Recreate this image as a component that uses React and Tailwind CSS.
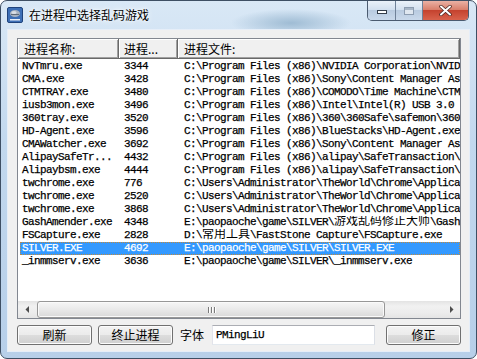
import React from "react";

const mono =
  "font-['Liberation_Mono','Noto_Sans_CJK_SC',monospace] text-[11px] tracking-[-0.6px] [-webkit-text-stroke:0.25px_currentColor]";
const cjk = "font-['Noto_Sans_CJK_SC','Liberation_Sans',sans-serif] text-[12px]";

const rows = [
  ["NvTmru.exe", "3344", "C:\\Program Files (x86)\\NVIDIA Corporation\\NVIDIA Update Core\\NvTmru.exe"],
  ["CMA.exe", "3428", "C:\\Program Files (x86)\\Sony\\Content Manager Assistant\\CMA.exe"],
  ["CTMTRAY.exe", "3480", "C:\\Program Files (x86)\\COMODO\\Time Machine\\CTMTRAY.exe"],
  ["iusb3mon.exe", "3496", "C:\\Program Files (x86)\\Intel\\Intel(R) USB 3.0 eXtensible Host Controller Driver\\iusb3mon.exe"],
  ["360tray.exe", "3520", "C:\\Program Files (x86)\\360\\360Safe\\safemon\\360tray.exe"],
  ["HD-Agent.exe", "3596", "C:\\Program Files (x86)\\BlueStacks\\HD-Agent.exe"],
  ["CMAWatcher.exe", "3692", "C:\\Program Files (x86)\\Sony\\Content Manager Assistant\\CMAWatcher.exe"],
  ["AlipaySafeTr...", "4432", "C:\\Program Files (x86)\\alipay\\SafeTransaction\\AlipaySafeTran.exe"],
  ["Alipaybsm.exe", "4444", "C:\\Program Files (x86)\\alipay\\SafeTransaction\\Alipaybsm.exe"],
  ["twchrome.exe", "776", "C:\\Users\\Administrator\\TheWorld\\Chrome\\Application\\twchrome.exe"],
  ["twchrome.exe", "2520", "C:\\Users\\Administrator\\TheWorld\\Chrome\\Application\\twchrome.exe"],
  ["twchrome.exe", "3868", "C:\\Users\\Administrator\\TheWorld\\Chrome\\Application\\twchrome.exe"],
  ["GashAmender.exe", "4348", "E:\\paopaoche\\game\\SILVER\\游戏乱码修正大师\\GashAmender.exe"],
  ["FSCapture.exe", "2828", "D:\\常用工具\\FastStone Capture\\FSCapture.exe"],
  ["SILVER.EXE", "4692", "E:\\paopaoche\\game\\SILVER\\SILVER.EXE"],
  ["_inmmserv.exe", "3636", "E:\\paopaoche\\game\\SILVER\\_inmmserv.exe"],
];

// CJK runs inside the mono text get full 12px width
function Mixed({ text }) {
  return text.split(/([\u3400-\u9fff]+)/).map((part, i) =>
    /[\u3400-\u9fff]/.test(part) ? (
      <span key={i} className="text-[12px] tracking-normal [-webkit-text-stroke:0px]">
        {part}
      </span>
    ) : (
      part
    )
  );
}

const btn =
  "flex h-[20px] w-[75px] shrink-0 items-center justify-center rounded-[3px] border border-[#707070] bg-[linear-gradient(#f2f2f2,#ebebeb_50%,#dddddd_50%,#cfcfcf)] shadow-[inset_0_0_0_1px_#fcfcfc] text-black";

const headCell =
  "flex h-full items-center border-r border-b border-[#696969] bg-[#f0f0f0] shadow-[inset_1px_1px_0_#ffffff,inset_-1px_-1px_0_#a0a0a0]";

function AppIcon() {
  return (
    <svg width="16" height="16" viewBox="0 0 16 16" className="shrink-0">
      <rect x="0.5" y="0.5" width="15" height="15" rx="1.5" fill="#3d6fb6" stroke="#1f437c" />
      <ellipse cx="8" cy="6.5" rx="5" ry="3.6" fill="#a7b1bf" />
      <ellipse cx="7" cy="5.6" rx="2.6" ry="1.5" fill="#d9dee5" />
      <path d="M4 7.5h8" stroke="#5f6b7a" strokeWidth="1" />
      <rect x="3" y="12" width="10" height="1.5" fill="#e8eef7" />
    </svg>
  );
}

function Arrow({ dir }) {
  return (
    <svg width="4" height="7" viewBox="0 0 4 7">
      {dir === "left" ? (
        <path d="M4 0 L0.5 3.5 L4 7 Z" fill="#4d4d4d" />
      ) : (
        <path d="M0 0 L3.5 3.5 L0 7 Z" fill="#4d4d4d" />
      )}
    </svg>
  );
}

export default function App() {
  return (
    <div className="h-[359px] w-[477px] bg-white">
      <div className="flex h-full flex-col rounded-[7px] border border-[#3e4f64] bg-[radial-gradient(ellipse_60px_14px_at_290px_22px,#9fbcd4,transparent),linear-gradient(#d9e8f6,#c2d8ee_40%,#b7cfe9)] px-[7px] pb-[7px]">
        {/* title bar */}
        <div className="-mx-[7px] flex h-[29px] shrink-0 items-start pl-[6px] pr-[7px]">
          <div className="mt-[6px] flex items-center gap-[6px]">
            <AppIcon />
            <span className={`${cjk} leading-[16px] text-black [text-shadow:0_0_6px_#ffffff,0_0_3px_#ffffff]`}>
              在进程中选择乱码游戏
            </span>
          </div>
          <div className="ml-auto flex h-[20px] overflow-hidden rounded-b-[5px] border border-t-0 border-[#4b5b70]">
            <div className="flex w-[28px] items-center justify-center border-r border-[#6f8198] bg-[linear-gradient(#eaf1f9,#d3e0ef_45%,#b9cbe0_50%,#c9d9eb)]">
              <div className="mt-[3px] h-[4px] w-[10px] border border-[#333d4a] bg-white" />
            </div>
            <div className="flex w-[27px] items-center justify-center border-r border-[#6f8198] bg-[linear-gradient(#eaf1f9,#d3e0ef_45%,#b9cbe0_50%,#c9d9eb)]">
              <div className="h-[8px] w-[10px] border border-[#8d9db1] bg-[#dfe7f0] shadow-[inset_0_2px_0_#a9b7c8]" />
            </div>
            <div className="flex w-[45px] items-center justify-center bg-[linear-gradient(#eab1a4,#d9806d_45%,#c5432f_50%,#d8624c)]">
              <svg width="13" height="11" viewBox="0 0 13 11">
                <path d="M2 1.5 L11 9.5 M11 1.5 L2 9.5" stroke="#4a2520" strokeWidth="3.4" strokeLinecap="round" />
                <path d="M2 1.5 L11 9.5 M11 1.5 L2 9.5" stroke="#ffffff" strokeWidth="2" strokeLinecap="round" />
              </svg>
            </div>
          </div>
        </div>

        {/* client */}
        <div className="flex flex-1 flex-col bg-[#f0f0f0] pl-[9px] pr-[8px] pt-[8px] outline outline-1 outline-[#e6eef8]">
          {/* list view */}
          <div className="flex h-[281px] flex-col overflow-hidden border border-[#828790] bg-white">
            <div className={`flex h-[20px] shrink-0 ${cjk} leading-[14px] text-black`}>
              <div className={`${headCell} w-[101px] pl-[6px]`}>进程名称:</div>
              <div className={`${headCell} w-[59px] pl-[5px]`}>进程...</div>
              <div className={`${headCell} flex-1 pl-[6px]`}>进程文件:</div>
            </div>
            <div className={`flex-1 overflow-hidden pt-[1px] ${mono} leading-[13px] text-black`}>
              {rows.map(([name, pid, path], i) => {
                const sel = name === "SILVER.EXE";
                return (
                  <div
                    key={i}
                    className={`flex h-[13px] whitespace-nowrap ${
                      sel ? "ml-[2px] bg-[#3399ff] text-white outline outline-1 -outline-offset-1 outline-dotted outline-[#c08a3e]" : ""
                    }`}
                  >
                    <div className={`${sel ? "w-[99px] pl-[2px]" : "w-[101px] pl-[4px]"} shrink-0 overflow-hidden`}>{name}</div>
                    <div className="w-[59px] shrink-0 overflow-hidden pl-[5px]">{pid}</div>
                    <div className="flex-1 overflow-hidden pl-[6px]">
                      <Mixed text={path} />
                    </div>
                  </div>
                );
              })}
            </div>
            {/* horizontal scrollbar */}
            <div className="flex h-[17px] shrink-0 bg-[linear-gradient(#e3e3e3,#f1f1f1_30%,#ececec_70%,#e4e4e4)]">
              <div className="flex w-[17px] items-center justify-center">
                <Arrow dir="left" />
              </div>
              <div className="ml-[2px] flex h-full w-[348px] items-center justify-center rounded-[3px] border border-[#979797] bg-[linear-gradient(#f6f6f6,#e9e9e9_50%,#d9d9d9)] shadow-[inset_0_0_0_1px_#fafafa]">
                <div className="flex gap-[1px]">
                  <div className="h-[6px] w-[1px] bg-[#7a7a7a] shadow-[1px_0_0_#ffffff]" />
                  <div className="ml-[1px] h-[6px] w-[1px] bg-[#7a7a7a] shadow-[1px_0_0_#ffffff]" />
                  <div className="ml-[1px] h-[6px] w-[1px] bg-[#7a7a7a] shadow-[1px_0_0_#ffffff]" />
                </div>
              </div>
              <div className="flex-1" />
              <div className="flex w-[17px] items-center justify-center">
                <Arrow dir="right" />
              </div>
            </div>
          </div>

          {/* bottom buttons */}
          <div className={`mt-[6px] flex h-[20px] items-center ${cjk} leading-[14px]`}>
            <div className={btn}>刷新</div>
            <div className={`${btn} ml-[6px]`}>终止进程</div>
            <span className="ml-[7px] w-[24px] shrink-0 text-black">字体</span>
            <div className={`ml-[8px] flex h-[20px] w-[163px] items-center border border-[#abadb3] border-b-[#e3e9ef] border-l-[#e2e3ea] border-r-[#dbdfe6] bg-white pl-[3px] ${mono} text-black`}>
              PMingLiU
            </div>
            <div className={`${btn} ml-[11px]`}>修正</div>
          </div>
        </div>
      </div>
    </div>
  );
}
